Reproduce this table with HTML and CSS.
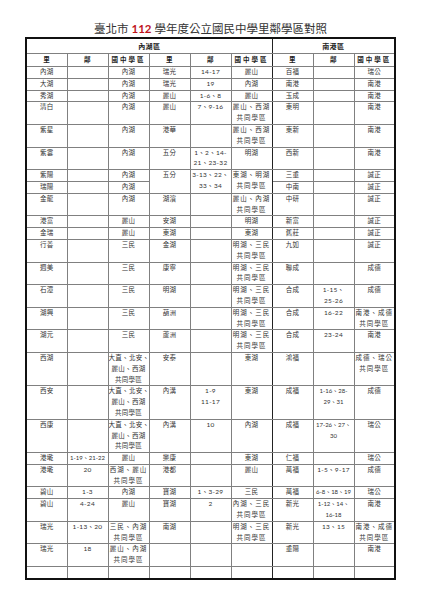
FILE: index.html
```html
<!DOCTYPE html>
<html lang="zh-Hant">
<head>
<meta charset="utf-8">
<title>臺北市 112 學年度公立國民中學里鄰學區對照</title>
<link rel="stylesheet" href="styles.css">
</head>
<body>
<div class="page">
<h1 class="title">臺北市 <span class="yr">112</span> 學年度公立國民中學里鄰學區對照</h1>
<table class="grid">
<colgroup><col><col><col><col><col><col><col><col><col></colgroup>
<thead>
<tr class="hd1"><th colspan="6" class="sep">內湖區</th><th colspan="3">南港區</th></tr>
<tr class="hd2"><th>里</th><th>鄰</th><th class="sp">國中學區</th><th>里</th><th>鄰</th><th class="sp sep">國中學區</th><th>里</th><th>鄰</th><th class="sp">國中學區</th></tr>
</thead>
<tbody>
<tr><td>內湖</td><td></td><td>內湖</td><td>瑞光</td><td>14-17</td><td class="sep">麗山</td><td>百福</td><td></td><td>瑞公</td></tr>
<tr><td>大湖</td><td></td><td>內湖</td><td>瑞光</td><td>19</td><td class="sep">內湖</td><td>南港</td><td></td><td>南港</td></tr>
<tr><td>秀湖</td><td></td><td>內湖</td><td>麗山</td><td>1-6、8</td><td class="sep">麗山</td><td>玉成</td><td></td><td>南港</td></tr>
<tr><td>清白</td><td></td><td>內湖</td><td>麗山</td><td>7、9-16</td><td class="sep w">麗山、西湖<br>共同學區</td><td>東明</td><td></td><td>南港</td></tr>
<tr><td>紫星</td><td></td><td>內湖</td><td>港華</td><td></td><td class="sep w">麗山、西湖<br>共同學區</td><td>東新</td><td></td><td>南港</td></tr>
<tr><td>紫雲</td><td></td><td>內湖</td><td>五分</td><td>1、2、14-<br>21、23-32</td><td class="sep">明湖</td><td>西新</td><td></td><td>南港</td></tr>
<tr><td>紫陽</td><td></td><td>內湖</td><td rowspan="2">五分</td><td rowspan="2">3-13、22、<br>33、34</td><td rowspan="2" class="sep w">東湖、明湖<br>共同學區</td><td>三重</td><td></td><td>誠正</td></tr>
<tr><td>瑞陽</td><td></td><td>內湖</td><td>中南</td><td></td><td>誠正</td></tr>
<tr><td>金龍</td><td></td><td>內湖</td><td>湖濱</td><td></td><td class="sep w">麗山、內湖<br>共同學區</td><td>中研</td><td></td><td>誠正</td></tr>
<tr><td>港富</td><td></td><td>麗山</td><td>安湖</td><td></td><td class="sep">明湖</td><td>新富</td><td></td><td>誠正</td></tr>
<tr><td>金瑞</td><td></td><td>麗山</td><td>東湖</td><td></td><td class="sep">東湖</td><td>舊莊</td><td></td><td>誠正</td></tr>
<tr><td>行善</td><td></td><td>三民</td><td>金湖</td><td></td><td class="sep w">明湖、三民<br>共同學區</td><td>九如</td><td></td><td>誠正</td></tr>
<tr><td>週美</td><td></td><td>三民</td><td>康寧</td><td></td><td class="sep w">明湖、三民<br>共同學區</td><td>聯成</td><td></td><td>成德</td></tr>
<tr><td>石潭</td><td></td><td>三民</td><td>明湖</td><td></td><td class="sep w">明湖、三民<br>共同學區</td><td>合成</td><td>1-15、<br>25-26</td><td>成德</td></tr>
<tr><td>湖興</td><td></td><td>三民</td><td>葫洲</td><td></td><td class="sep w">明湖、三民<br>共同學區</td><td>合成</td><td>16-22</td><td class="w">南港、成德<br>共同學區</td></tr>
<tr><td>湖元</td><td></td><td>三民</td><td>蘆洲</td><td></td><td class="sep w">明湖、三民<br>共同學區</td><td>合成</td><td>23-24</td><td>南港</td></tr>
<tr><td>西湖</td><td></td><td>大直、北安、<br>麗山、西湖<br>共同學區</td><td>安泰</td><td></td><td class="sep">東湖</td><td>鴻福</td><td></td><td class="w">成德、瑞公<br>共同學區</td></tr>
<tr><td>西安</td><td></td><td>大直、北安、<br>麗山、西湖<br>共同學區</td><td>內溝</td><td>1-9<br>11-17</td><td class="sep">東湖</td><td>成福</td><td class="tight">1-16、28-<br>29、31</td><td>成德</td></tr>
<tr><td>西康</td><td></td><td>大直、北安、<br>麗山、西湖<br>共同學區</td><td>內溝</td><td>10</td><td class="sep">內湖</td><td>成福</td><td class="tight">17-26、27、<br>30</td><td>瑞公</td></tr>
<tr><td>港墘</td><td class="tight">1-19、21-22</td><td>麗山</td><td>樂康</td><td></td><td class="sep">東湖</td><td>仁福</td><td></td><td>瑞公</td></tr>
<tr><td>港墘</td><td>20</td><td class="w">西湖、麗山<br>共同學區</td><td>港都</td><td></td><td class="sep">麗山</td><td>萬福</td><td>1-5、9-17</td><td>成德</td></tr>
<tr><td>碧山</td><td>1-3</td><td>內湖</td><td>寶湖</td><td>1、3-29</td><td class="sep">三民</td><td>萬福</td><td class="tight">6-8、18、19</td><td>瑞公</td></tr>
<tr><td>碧山</td><td>4-24</td><td>麗山</td><td>寶湖</td><td>2</td><td class="sep w">內湖、三民<br>共同學區</td><td>新光</td><td class="tight">1-12、14、<br>16-18</td><td>南港</td></tr>
<tr><td>瑞光</td><td>1-13、20</td><td class="w">三民、內湖<br>共同學區</td><td>南湖</td><td></td><td class="sep w">明湖、三民<br>共同學區</td><td>新光</td><td>13、15</td><td class="w">南港、成德<br>共同學區</td></tr>
<tr><td>瑞光</td><td>18</td><td class="w">麗山、內湖<br>共同學區</td><td></td><td></td><td class="sep"></td><td>重陽</td><td></td><td>南港</td></tr>
<tr class="blank"><td></td><td></td><td></td><td></td><td></td><td class="sep"></td><td></td><td></td><td></td></tr>
</tbody>
</table>
</div>
</body>
</html>
```

FILE: styles.css
```css
html, body {
  margin: 0;
  padding: 0;
  background: #ffffff;
}

body {
  font-family: Lato, "Noto Sans CJK TC", sans-serif;
  color: #333333;
}

.page {
  width: 425px;
  height: 600px;
  padding-top: 20px;
  box-sizing: border-box;
}

.title {
  margin: 0 0 0 25px;
  width: 371px;
  height: 17px;
  font-size: 11.5px;
  line-height: 17px;
  font-weight: normal;
  text-align: center;
  color: #333333;
  white-space: nowrap;
}

.yr {
  color: #c0141c;
  font-weight: bold;
}

.grid {
  margin-left: 25px;
  width: 371px;
  border-collapse: collapse;
  table-layout: fixed;
  border: 2px solid #111111;
}

.grid th,
.grid td {
  border: 1px solid #808080;
  padding: 0;
  text-align: center;
  vertical-align: top;
  font-size: 6.5px;
  line-height: 10.8px;
  white-space: nowrap;
  overflow: hidden;
  letter-spacing: 0.3px;
}

.grid th {
  font-weight: bold;
  color: #222222;
  vertical-align: middle;
}

.hd1 th {
  height: 14px;
  line-height: 14px;
  font-size: 7px;
}

.hd2 th {
  height: 12px;
  line-height: 12px;
}

.grid .sp {
  letter-spacing: 2px;
}

.grid .sep {
  border-right: 1px solid #222222;
}

.grid .w {
  letter-spacing: 1px;
}

.grid .tight {
  letter-spacing: 0;
  font-size: 6px;
}

.blank td {
  height: 10.8px;
}
```
